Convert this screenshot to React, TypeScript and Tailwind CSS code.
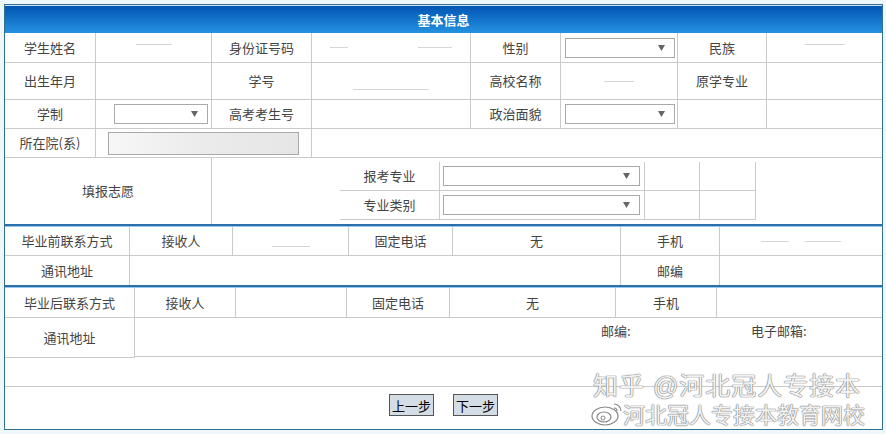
import React from 'react';
import clsx from 'clsx';

const Cell = ({ w, last, className, children }: { w: string; last?: boolean; className?: string; children?: React.ReactNode }) => (
    <div className={clsx('h-full flex items-center justify-center border-[#cacaca] shrink-0', !last && 'border-r', w, className)}>
        {children}
    </div>
);

const Select = ({ w }: { w: string }) => (
    <div className={clsx('relative h-[20px] border border-[#a9a9a9] bg-white', w)}>
        <svg className="absolute right-[9px] top-[6px]" width="7" height="6" viewBox="0 0 7 6">
            <path d="M0 0H7L3.5 6Z" fill="#666" />
        </svg>
    </div>
);

const Trace = ({ w }: { w: string }) => <div className={clsx('h-px bg-[#d6d6d6]', w)} />;

const Divider = () => <div className="h-[3px] shrink-0 bg-[#2d6fa9] border-b border-[#93c9ea]" />;

const Button = ({ label }: { label: string }) => (
    <button className="w-[45px] h-[22px] bg-[#d4dce6] border border-[#555] text-[13px] text-black leading-none">
        {label}
    </button>
);

export default function App() {
    return (
        <div className="relative w-[886px] h-[434px] bg-[#eef8fa] pt-[4px] pl-[4px] font-['Noto_Sans_CJK_SC','Noto_Sans',sans-serif] text-[13px] text-[#444] overflow-hidden">
            <div className="w-[879px] h-[426px] border border-[#33708f] bg-white flex flex-col">
                {/* header */}
                <div className="h-[28px] shrink-0 border-t border-[#cfe5f4] bg-linear-to-b from-[#0455b3] to-[#2592e0] flex items-center justify-center text-white font-bold">
                    基本信息
                </div>

                {/* 基本信息 rows */}
                <div className="flex h-[30px] shrink-0 border-b border-[#cacaca]">
                    <Cell w="w-[91px]">学生姓名</Cell>
                    <Cell w="w-[116px]"><Trace w="w-[36px] mt-[-6px]" /></Cell>
                    <Cell w="w-[100px]">身份证号码</Cell>
                    <Cell w="w-[159px]" className="gap-[70px]"><Trace w="w-[18px]" /><Trace w="w-[34px]" /></Cell>
                    <Cell w="w-[90px]">性别</Cell>
                    <Cell w="w-[117px]" className="justify-start pl-[4px]"><Select w="w-[110px]" /></Cell>
                    <Cell w="w-[89px]">民族</Cell>
                    <Cell w="w-[115px]" last><Trace w="w-[40px] mt-[-6px]" /></Cell>
                </div>
                <div className="flex h-[37px] shrink-0 border-b border-[#cacaca]">
                    <Cell w="w-[91px]">出生年月</Cell>
                    <Cell w="w-[116px]" />
                    <Cell w="w-[100px]">学号</Cell>
                    <Cell w="w-[159px]" className="items-end pb-[9px]"><Trace w="w-[76px]" /></Cell>
                    <Cell w="w-[90px]">高校名称</Cell>
                    <Cell w="w-[117px]"><Trace w="w-[30px]" /></Cell>
                    <Cell w="w-[89px]">原学专业</Cell>
                    <Cell w="w-[115px]" last />
                </div>
                <div className="flex h-[29px] shrink-0 border-b border-[#cacaca]">
                    <Cell w="w-[91px]">学制</Cell>
                    <Cell w="w-[116px]" className="justify-start pl-[18px]"><Select w="w-[94px]" /></Cell>
                    <Cell w="w-[100px]">高考考生号</Cell>
                    <Cell w="w-[159px]" />
                    <Cell w="w-[90px]">政治面貌</Cell>
                    <Cell w="w-[117px]" className="justify-start pl-[4px]"><Select w="w-[110px]" /></Cell>
                    <Cell w="w-[89px]" />
                    <Cell w="w-[115px]" last />
                </div>
                <div className="flex h-[29px] shrink-0 border-b border-[#cacaca]">
                    <Cell w="w-[91px]">所在院(系)</Cell>
                    <Cell w="w-[216px]" className="justify-start pl-[12px]">
                        <div className="w-[191px] h-[23px] border border-[#a9a9a9] bg-linear-to-r from-[#f7f7f7] via-[#ebebeb] to-[#e6e6e6]" />
                    </Cell>
                    <Cell w="w-[570px]" last />
                </div>

                {/* 填报志愿 */}
                <div className="flex h-[66px] shrink-0">
                    <Cell w="w-[207px]">填报志愿</Cell>
                    <div className="flex-1 flex items-center pl-[128px]">
                        <div className="flex flex-col">
                            {['报考专业', '专业类别'].map((label) => (
                                <div key={label} className="flex h-[29px] border-b border-[#cacaca]">
                                    <div className="w-[100px] flex items-center justify-center border-r border-[#cacaca]">{label}</div>
                                    <div className="w-[205px] flex items-center pl-[3px] border-r border-[#cacaca]">
                                        <Select w="w-[197px]" />
                                    </div>
                                    <div className="w-[55px] border-r border-[#cacaca]" />
                                    <div className="w-[56px] border-r border-[#cacaca]" />
                                </div>
                            ))}
                        </div>
                    </div>
                </div>

                <Divider />

                {/* 毕业前联系方式 */}
                <div className="flex h-[29px] shrink-0 border-b border-[#cacaca]">
                    <Cell w="w-[125px]">毕业前联系方式</Cell>
                    <Cell w="w-[103px]">接收人</Cell>
                    <Cell w="w-[116px]" className="items-end pb-[8px]"><Trace w="w-[38px]" /></Cell>
                    <Cell w="w-[104px]">固定电话</Cell>
                    <Cell w="w-[168px]">无</Cell>
                    <Cell w="w-[99px]">手机</Cell>
                    <Cell w="w-[162px]" last className="gap-[16px]"><Trace w="w-[28px]" /><Trace w="w-[36px]" /></Cell>
                </div>
                <div className="flex h-[29px] shrink-0">
                    <Cell w="w-[125px]">通讯地址</Cell>
                    <Cell w="w-[491px]" />
                    <Cell w="w-[99px]">邮编</Cell>
                    <Cell w="w-[162px]" last />
                </div>

                <Divider />

                {/* 毕业后联系方式 */}
                <div className="flex h-[30px] shrink-0 border-b border-[#cacaca]">
                    <Cell w="w-[130px]">毕业后联系方式</Cell>
                    <Cell w="w-[101px]">接收人</Cell>
                    <Cell w="w-[111px]" />
                    <Cell w="w-[103px]">固定电话</Cell>
                    <Cell w="w-[166px]">无</Cell>
                    <Cell w="w-[101px]">手机</Cell>
                    <Cell w="w-[165px]" last />
                </div>
                <div className="flex h-[40px] shrink-0">
                    <Cell w="w-[130px]" className="border-b">通讯地址</Cell>
                    <div className="flex-1 h-[39px] border-b border-[#cacaca] flex items-start pt-[4px] leading-[17px]">
                        <span className="ml-[466px] w-[150px]">邮编:</span>
                        <span>电子邮箱:</span>
                    </div>
                </div>
                <div className="h-[29px] shrink-0 border-b border-[#cacaca]" />
                <div className="flex-1 flex justify-center items-start pt-[7px] gap-[19px]">
                    <Button label="上一步" />
                    <Button label="下一步" />
                </div>
            </div>

            {/* watermark */}
            <div className="absolute left-[593px] top-[374px] font-['Liberation_Sans','Noto_Sans_CJK_SC',sans-serif] text-[25px] leading-[25px] text-white/90 tracking-[1px] [text-shadow:0_0_1px_#777,0_0_1px_#777,0_0_1px_#777]">
                知乎 @河北冠人专接本
            </div>
            <svg className="absolute left-[590px] top-[400px]" width="34" height="28" viewBox="0 0 34 28">
                <ellipse cx="15" cy="16" rx="13" ry="9" fill="white" fillOpacity="0.8" stroke="#888" strokeWidth="1.2" />
                <ellipse cx="14" cy="17" rx="7" ry="5" fill="none" stroke="#888" strokeWidth="1.2" />
                <circle cx="13" cy="18" r="2" fill="none" stroke="#888" strokeWidth="1" />
                <path d="M24 4a7 7 0 0 1 7 7" fill="none" stroke="#888" strokeWidth="1.2" />
                <path d="M24 8a3 3 0 0 1 3 3" fill="none" stroke="#888" strokeWidth="1.2" />
            </svg>
            <div className="absolute left-[623px] top-[404px] font-['Liberation_Sans','Noto_Sans_CJK_SC',sans-serif] text-[22px] leading-[23px] text-white/90 [text-shadow:0_0_1px_#777,0_0_1px_#777,0_0_1px_#777]">
                河北冠人专接本教育网校
            </div>
        </div>
    );
}
